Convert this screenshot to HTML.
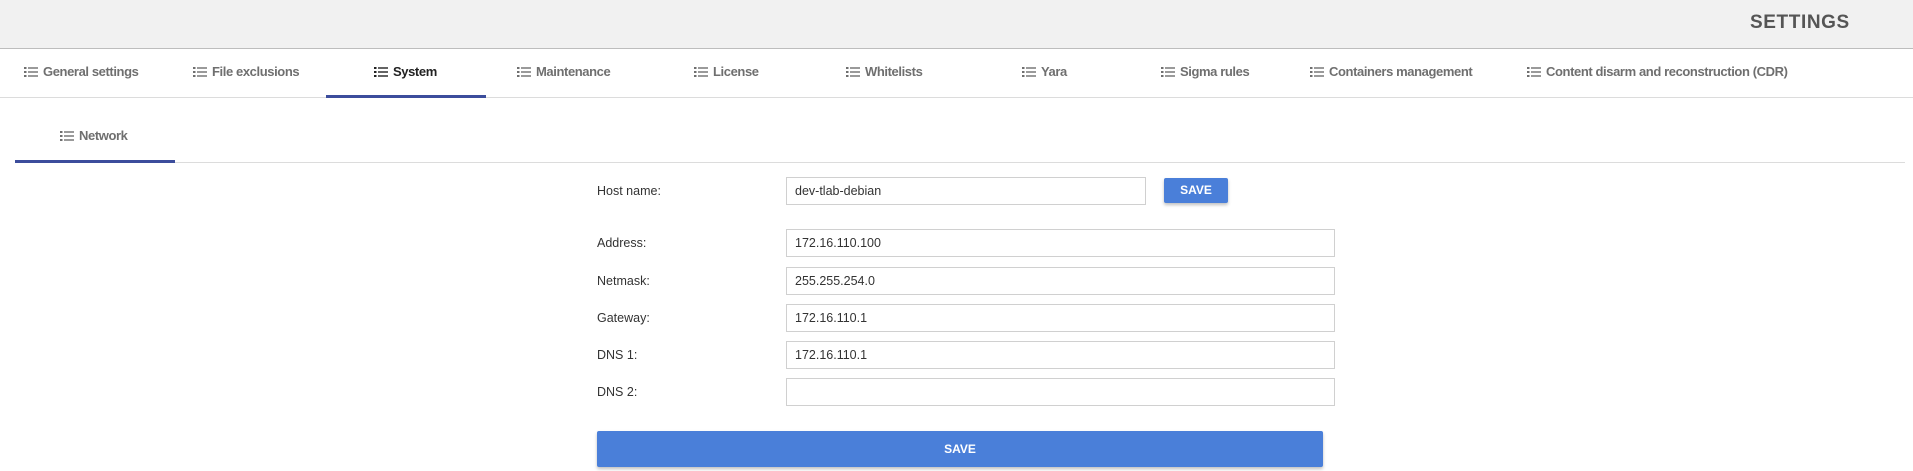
<!DOCTYPE html>
<html><head><meta charset="utf-8"><style>
*{margin:0;padding:0;box-sizing:border-box}
body{width:1913px;height:471px;background:#fff;font-family:"Liberation Sans",sans-serif;position:relative;overflow:hidden}
.hdr{position:absolute;left:0;top:0;width:1913px;height:49px;background:#f1f1f1;border-bottom:1px solid #bdbdbd}
.ttl{position:absolute;left:1750px;top:12px;font-size:19px;font-weight:bold;color:#555;letter-spacing:0.6px}
.tabline{position:absolute;left:0;top:97px;width:1913px;height:1px;background:#dcdcdc}
.tab{position:absolute;top:64px;font-size:13px;font-weight:bold;color:#6f6f6f;white-space:nowrap;letter-spacing:-0.4px}
.tab svg{position:absolute;left:-19px;top:3px}
.act{color:#222}
.ul{position:absolute;height:3px;background:#3c4d9c}
.sub{position:absolute;left:15px;top:162px;width:1890px;height:1px;background:#dcdcdc}
.lbl{position:absolute;left:597px;font-size:12.5px;color:#333}
.in{position:absolute;left:786px;width:549px;height:28px;border:1px solid #d0d0d0;font-size:12.5px;color:#333;padding:6px 0 0 8px}
.btn{position:absolute;background:#4a7fd9;color:#fff;font-weight:bold;font-size:12px;text-align:center;border-radius:2px;box-shadow:0 2px 3px rgba(0,0,0,.25)}
</style></head><body>
<div class="hdr"><div class="ttl">SETTINGS</div></div>
<svg width="0" height="0" style="position:absolute"><defs><g id="ic"><rect x="0" y="0" width="2.5" height="2" /><rect x="0" y="4" width="2.5" height="2"/><rect x="0" y="8" width="2.5" height="2"/><rect x="4" y="0.3" width="10" height="1.4"/><rect x="4" y="4.3" width="10" height="1.4"/><rect x="4" y="8.3" width="10" height="1.4"/></g></defs></svg>
<div class="tab" style="left:43px"><svg width="15" height="10" fill="#6f6f6f"><use href="#ic"/></svg>General settings</div>
<div class="tab" style="left:212px"><svg width="15" height="10" fill="#6f6f6f"><use href="#ic"/></svg>File exclusions</div>
<div class="tab act" style="left:393px"><svg width="15" height="10" fill="#222"><use href="#ic"/></svg>System</div>
<div class="tab" style="left:536px"><svg width="15" height="10" fill="#6f6f6f"><use href="#ic"/></svg>Maintenance</div>
<div class="tab" style="left:713px"><svg width="15" height="10" fill="#6f6f6f"><use href="#ic"/></svg>License</div>
<div class="tab" style="left:865px"><svg width="15" height="10" fill="#6f6f6f"><use href="#ic"/></svg>Whitelists</div>
<div class="tab" style="left:1041px"><svg width="15" height="10" fill="#6f6f6f"><use href="#ic"/></svg>Yara</div>
<div class="tab" style="left:1180px"><svg width="15" height="10" fill="#6f6f6f"><use href="#ic"/></svg>Sigma rules</div>
<div class="tab" style="left:1329px"><svg width="15" height="10" fill="#6f6f6f"><use href="#ic"/></svg>Containers management</div>
<div class="tab" style="left:1546px"><svg width="15" height="10" fill="#6f6f6f"><use href="#ic"/></svg>Content disarm and reconstruction (CDR)</div>
<div class="tabline"></div>
<div class="ul" style="left:326px;top:95px;width:160px"></div>
<div class="tab" style="left:79px;top:128px"><svg width="15" height="10" fill="#6f6f6f"><use href="#ic"/></svg>Network</div>
<div class="sub"></div>
<div class="ul" style="left:15px;top:160px;width:160px"></div>

<div class="lbl" style="top:184px">Host name:</div>
<div class="in" style="top:177px;width:360px">dev-tlab-debian</div>
<div class="btn" style="left:1164px;top:178px;width:64px;height:25px;line-height:25px">SAVE</div>

<div class="lbl" style="top:236px">Address:</div>
<div class="in" style="top:229px">172.16.110.100</div>
<div class="lbl" style="top:274px">Netmask:</div>
<div class="in" style="top:267px">255.255.254.0</div>
<div class="lbl" style="top:311px">Gateway:</div>
<div class="in" style="top:304px">172.16.110.1</div>
<div class="lbl" style="top:348px">DNS 1:</div>
<div class="in" style="top:341px">172.16.110.1</div>
<div class="lbl" style="top:385px">DNS 2:</div>
<div class="in" style="top:378px"></div>

<div class="btn" style="left:597px;top:431px;width:726px;height:36px;line-height:36px">SAVE</div>
</body></html>
